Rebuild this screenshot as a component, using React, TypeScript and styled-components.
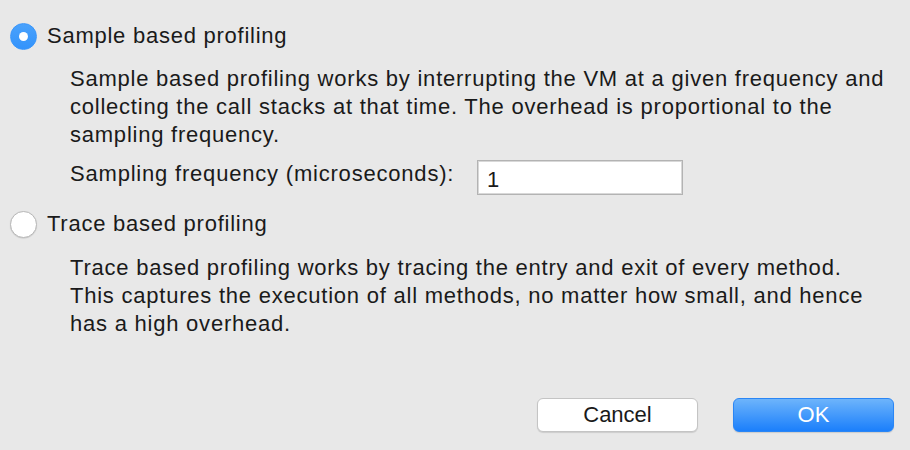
import React from "react";
import styled, { createGlobalStyle } from "styled-components";

const Global = createGlobalStyle`
  html, body { margin: 0; padding: 0; background: #e8e8e8; }
  body { font-family: "Liberation Sans", Arial, sans-serif; color: #1a1a1a; }
`;

const Dialog = styled.div`
  box-sizing: border-box;
  width: 910px;
  height: 450px;
  padding: 21px 16px 18px 10px;
  display: flex;
  flex-direction: column;
  font-size: 22px;
`;

const RadioRow = styled.label<{ $mt?: number }>`
  display: flex;
  align-items: center;
  gap: 10px;
  height: 30px;
  line-height: 30px;
  letter-spacing: 0.75px;
  margin-top: ${(p) => p.$mt ?? 0}px;
`;

const RadioCircle = styled.span<{ $checked?: boolean }>`
  box-sizing: border-box;
  width: 27px;
  height: 27px;
  border-radius: 50%;
  flex: none;
  display: flex;
  align-items: center;
  justify-content: center;
  background: ${(p) => (p.$checked ? "linear-gradient(#4aa2fc, #3393fb)" : "#ffffff")};
  border: 1px solid ${(p) => (p.$checked ? "#3a96fb" : "#b8b8b8")};
  box-shadow: ${(p) => (p.$checked ? "none" : "0 0.5px 1px rgba(0,0,0,0.15)")};
  &::after {
    content: "";
    display: ${(p) => (p.$checked ? "block" : "none")};
    width: 9px;
    height: 9px;
    border-radius: 50%;
    background: #ffffff;
  }
`;

const Description = styled.p<{ $mt: number }>`
  margin: ${(p) => p.$mt}px 0 0 60px;
  line-height: 28px;
  letter-spacing: 0.77px;
`;

const FieldRow = styled.div`
  display: grid;
  grid-template-columns: 407px 206px;
  align-items: start;
  margin: 11px 0 0 60px;
`;

const FieldLabel = styled.span`
  line-height: 28px;
  letter-spacing: 0.8px;
`;

const TextInput = styled.input`
  box-sizing: border-box;
  width: 206px;
  height: 35px;
  border: 1px solid #b3b3b3;
  box-shadow: inset 0 0 0 1px #d8d8d8;
  background: #fff;
  padding: 4px 9px 0;
  font: inherit;
  font-size: 22px;
  color: #1a1a1a;
  outline: none;
`;

const ButtonBar = styled.div`
  margin-top: auto;
  display: flex;
  justify-content: flex-end;
  gap: 35px;
`;

const Button = styled.button<{ $primary?: boolean }>`
  box-sizing: border-box;
  width: 161px;
  height: 34px;
  border-radius: 6px;
  font: inherit;
  font-size: 22px;
  line-height: 32px;
  padding: 0;
  color: ${(p) => (p.$primary ? "#ffffff" : "#1a1a1a")};
  background: ${(p) => (p.$primary ? "linear-gradient(#6db4fb, #1b7ffb)" : "#ffffff")};
  border: 1px solid ${(p) => (p.$primary ? "#2a86f5" : "#c4c4c4")};
  box-shadow: 0 1px 1px rgba(0, 0, 0, 0.12);
`;

export default function App() {
  return (
    <>
      <Global />
      <Dialog>
        <RadioRow>
          <RadioCircle $checked />
          <span>Sample based profiling</span>
        </RadioRow>
        <Description $mt={14}>
          Sample based profiling works by interrupting the VM at a given frequency and
          <br />
          collecting the call stacks at that time. The overhead is proportional to the
          <br />
          sampling frequency.
        </Description>
        <FieldRow>
          <FieldLabel>Sampling frequency (microseconds):</FieldLabel>
          <TextInput defaultValue="1" />
        </FieldRow>
        <RadioRow $mt={14}>
          <RadioCircle />
          <span>Trace based profiling</span>
        </RadioRow>
        <Description $mt={15}>
          Trace based profiling works by tracing the entry and exit of every method.
          <br />
          This captures the execution of all methods, no matter how small, and hence
          <br />
          has a high overhead.
        </Description>
        <ButtonBar>
          <Button>Cancel</Button>
          <Button $primary>OK</Button>
        </ButtonBar>
      </Dialog>
    </>
  );
}
